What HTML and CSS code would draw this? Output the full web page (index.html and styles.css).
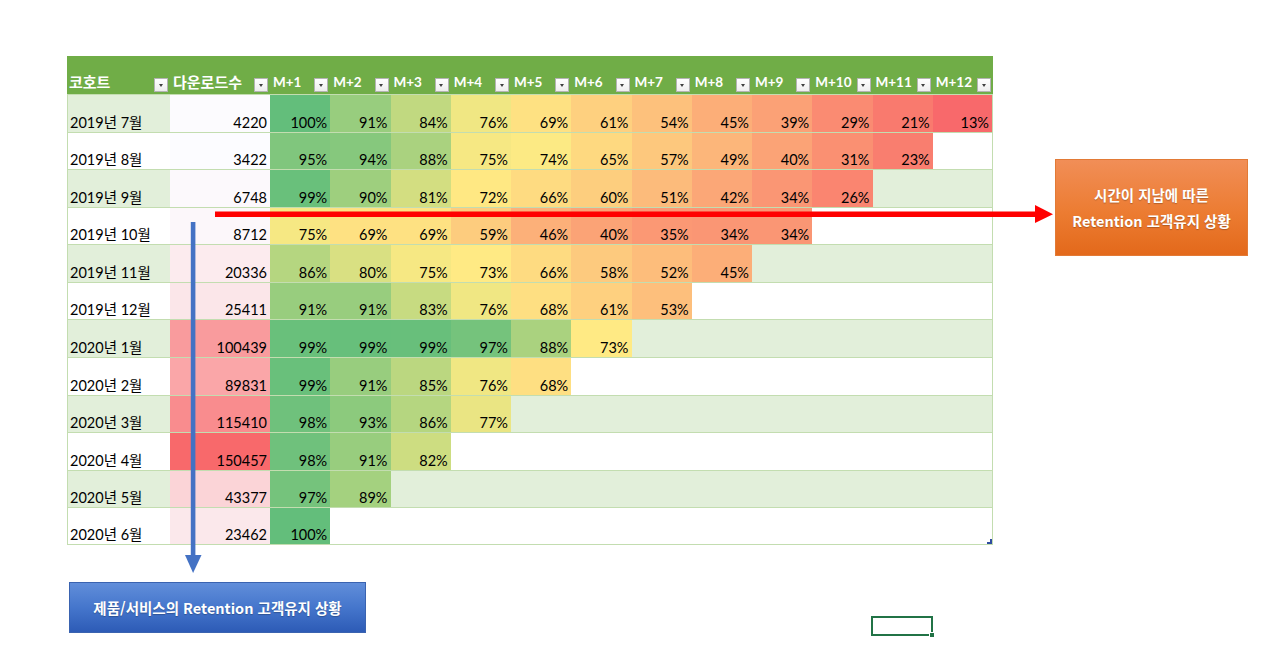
FILE: index.html
```html
<!DOCTYPE html>
<html lang="ko">
<head>
<meta charset="utf-8">
<title>Cohort Retention</title>
<link rel="stylesheet" href="styles.css">
</head>
<body>
<div class="page">
  <div class="cohort">
    <div class="hd"><span class="t ko">코호트</span><span class="dd"></span></div>
    <div class="hd"><span class="t ko">다운로드수</span><span class="dd"></span></div>
    <div class="hd"><span class="t">M+1</span><span class="dd"></span></div>
    <div class="hd"><span class="t">M+2</span><span class="dd"></span></div>
    <div class="hd"><span class="t">M+3</span><span class="dd"></span></div>
    <div class="hd"><span class="t">M+4</span><span class="dd"></span></div>
    <div class="hd"><span class="t">M+5</span><span class="dd"></span></div>
    <div class="hd"><span class="t">M+6</span><span class="dd"></span></div>
    <div class="hd"><span class="t">M+7</span><span class="dd"></span></div>
    <div class="hd"><span class="t">M+8</span><span class="dd"></span></div>
    <div class="hd"><span class="t">M+9</span><span class="dd"></span></div>
    <div class="hd"><span class="t">M+10</span><span class="dd"></span></div>
    <div class="hd"><span class="t">M+11</span><span class="dd"></span></div>
    <div class="hd"><span class="t">M+12</span><span class="dd"></span></div>

    <div class="row odd">
      <div class="c lbl">2019년 7월</div><div class="c num dl" data-v="4220">4220</div>
      <div class="c num pc" data-v="100">100%</div><div class="c num pc" data-v="91">91%</div><div class="c num pc" data-v="84">84%</div><div class="c num pc" data-v="76">76%</div><div class="c num pc" data-v="69">69%</div><div class="c num pc" data-v="61">61%</div><div class="c num pc" data-v="54">54%</div><div class="c num pc" data-v="45">45%</div><div class="c num pc" data-v="39">39%</div><div class="c num pc" data-v="29">29%</div><div class="c num pc" data-v="21">21%</div><div class="c num pc last" data-v="13">13%</div>
    </div>
    <div class="row">
      <div class="c lbl">2019년 8월</div><div class="c num dl" data-v="3422">3422</div>
      <div class="c num pc" data-v="95">95%</div><div class="c num pc" data-v="94">94%</div><div class="c num pc" data-v="88">88%</div><div class="c num pc" data-v="75">75%</div><div class="c num pc" data-v="74">74%</div><div class="c num pc" data-v="65">65%</div><div class="c num pc" data-v="57">57%</div><div class="c num pc" data-v="49">49%</div><div class="c num pc" data-v="40">40%</div><div class="c num pc" data-v="31">31%</div><div class="c num pc" data-v="23">23%</div><div class="c last"></div>
    </div>
    <div class="row odd">
      <div class="c lbl">2019년 9월</div><div class="c num dl" data-v="6748">6748</div>
      <div class="c num pc" data-v="99">99%</div><div class="c num pc" data-v="90">90%</div><div class="c num pc" data-v="81">81%</div><div class="c num pc" data-v="72">72%</div><div class="c num pc" data-v="66">66%</div><div class="c num pc" data-v="60">60%</div><div class="c num pc" data-v="51">51%</div><div class="c num pc" data-v="42">42%</div><div class="c num pc" data-v="34">34%</div><div class="c num pc" data-v="26">26%</div><div class="c"></div><div class="c last"></div>
    </div>
    <div class="row">
      <div class="c lbl">2019년 10월</div><div class="c num dl" data-v="8712">8712</div>
      <div class="c num pc" data-v="75">75%</div><div class="c num pc" data-v="69">69%</div><div class="c num pc" data-v="69">69%</div><div class="c num pc" data-v="59">59%</div><div class="c num pc" data-v="46">46%</div><div class="c num pc" data-v="40">40%</div><div class="c num pc" data-v="35">35%</div><div class="c num pc" data-v="34">34%</div><div class="c num pc" data-v="34">34%</div><div class="c"></div><div class="c"></div><div class="c last"></div>
    </div>
    <div class="row odd">
      <div class="c lbl">2019년 11월</div><div class="c num dl" data-v="20336">20336</div>
      <div class="c num pc" data-v="86">86%</div><div class="c num pc" data-v="80">80%</div><div class="c num pc" data-v="75">75%</div><div class="c num pc" data-v="73">73%</div><div class="c num pc" data-v="66">66%</div><div class="c num pc" data-v="58">58%</div><div class="c num pc" data-v="52">52%</div><div class="c num pc" data-v="45">45%</div><div class="c"></div><div class="c"></div><div class="c"></div><div class="c last"></div>
    </div>
    <div class="row">
      <div class="c lbl">2019년 12월</div><div class="c num dl" data-v="25411">25411</div>
      <div class="c num pc" data-v="91">91%</div><div class="c num pc" data-v="91">91%</div><div class="c num pc" data-v="83">83%</div><div class="c num pc" data-v="76">76%</div><div class="c num pc" data-v="68">68%</div><div class="c num pc" data-v="61">61%</div><div class="c num pc" data-v="53">53%</div><div class="c"></div><div class="c"></div><div class="c"></div><div class="c"></div><div class="c last"></div>
    </div>
    <div class="row odd">
      <div class="c lbl">2020년 1월</div><div class="c num dl" data-v="100439">100439</div>
      <div class="c num pc" data-v="99">99%</div><div class="c num pc" data-v="99.4">99%</div><div class="c num pc" data-v="99.2">99%</div><div class="c num pc" data-v="97">97%</div><div class="c num pc" data-v="88">88%</div><div class="c num pc" data-v="73">73%</div><div class="c"></div><div class="c"></div><div class="c"></div><div class="c"></div><div class="c"></div><div class="c last"></div>
    </div>
    <div class="row">
      <div class="c lbl">2020년 2월</div><div class="c num dl" data-v="89831">89831</div>
      <div class="c num pc" data-v="99">99%</div><div class="c num pc" data-v="91">91%</div><div class="c num pc" data-v="85">85%</div><div class="c num pc" data-v="76">76%</div><div class="c num pc" data-v="68">68%</div><div class="c"></div><div class="c"></div><div class="c"></div><div class="c"></div><div class="c"></div><div class="c"></div><div class="c last"></div>
    </div>
    <div class="row odd">
      <div class="c lbl">2020년 3월</div><div class="c num dl" data-v="115410">115410</div>
      <div class="c num pc" data-v="98">98%</div><div class="c num pc" data-v="93">93%</div><div class="c num pc" data-v="86">86%</div><div class="c num pc" data-v="77">77%</div><div class="c"></div><div class="c"></div><div class="c"></div><div class="c"></div><div class="c"></div><div class="c"></div><div class="c"></div><div class="c last"></div>
    </div>
    <div class="row">
      <div class="c lbl">2020년 4월</div><div class="c num dl" data-v="150457">150457</div>
      <div class="c num pc" data-v="98">98%</div><div class="c num pc" data-v="91">91%</div><div class="c num pc" data-v="82">82%</div><div class="c"></div><div class="c"></div><div class="c"></div><div class="c"></div><div class="c"></div><div class="c"></div><div class="c"></div><div class="c"></div><div class="c last"></div>
    </div>
    <div class="row odd">
      <div class="c lbl">2020년 5월</div><div class="c num dl" data-v="43377">43377</div>
      <div class="c num pc" data-v="97">97%</div><div class="c num pc" data-v="89">89%</div><div class="c"></div><div class="c"></div><div class="c"></div><div class="c"></div><div class="c"></div><div class="c"></div><div class="c"></div><div class="c"></div><div class="c"></div><div class="c last"></div>
    </div>
    <div class="row end">
      <div class="c lbl">2020년 6월</div><div class="c num dl" data-v="23462">23462</div>
      <div class="c num pc" data-v="100">100%</div><div class="c"></div><div class="c"></div><div class="c"></div><div class="c"></div><div class="c"></div><div class="c"></div><div class="c"></div><div class="c"></div><div class="c"></div><div class="c"></div><div class="c last"><span class="corner"></span></div>
    </div>
  </div>

  <svg class="arrow-red" width="1280" height="656" viewBox="0 0 1280 656">
    <rect x="215" y="211.5" width="822" height="5.5" fill="#FF0000"/>
    <polygon points="1035,205 1053,214.2 1035,223" fill="#FF0000"/>
  </svg>
  <svg class="arrow-blue" width="1280" height="656" viewBox="0 0 1280 656">
    <rect x="190.8" y="222" width="4.6" height="335" fill="#4472C4"/>
    <polygon points="185,555 201.5,555 193.1,573" fill="#4472C4"/>
  </svg>

  <div class="note note-orange">시간이 지남에 따른<br>Retention 고객유지 상황</div>
  <div class="note note-blue">제품/서비스의 Retention 고객유지 상황</div>
  <div class="selection"><span class="handle"></span></div>
</div>
<script src="app.js"></script>
</body>
</html>
```

FILE: styles.css
```css
* { box-sizing: border-box; }

body {
  margin: 0;
  background: #ffffff;
  font-family: Lato, "Noto Sans CJK KR", sans-serif;
}

.page {
  position: relative;
  width: 1280px;
  height: 656px;
  overflow: hidden;
}

.cohort {
  margin: 56px 0 0 67px;
  width: 926px;
  display: grid;
  grid-template-columns: 103px 100px repeat(12, 1fr);
  grid-template-rows: 38px repeat(12, 37.58px);
}

.row { display: contents; }

.hd {
  background: #70AD47;
  color: #ffffff;
  font-weight: 700;
  font-size: 13.5px;
  line-height: 18px;
  display: flex;
  align-items: flex-end;
  justify-content: space-between;
  padding: 0 2px 2px 3px;
  font-family: Lato, "Noto Sans CJK KR", sans-serif;
  white-space: nowrap;
}

.hd:first-child { padding-left: 2px; }

.hd .t { padding-bottom: 1px; }
.hd .ko { font-size: 15px; }

.dd {
  position: relative;
  flex: none;
  width: 14px;
  height: 14px;
  background: linear-gradient(#ffffff, #eeeeee);
  border: 1px solid #b4b4b4;
}

.dd::after {
  content: "";
  position: absolute;
  left: 3.5px;
  top: 5px;
  border-left: 2.5px solid transparent;
  border-right: 2.5px solid transparent;
  border-top: 3px solid #404040;
}

.c {
  position: relative;
  border-top: 1px solid #C3DDB0;
  display: flex;
  align-items: flex-end;
  padding: 0 3px 1px 3px;
  font-size: 14.5px;
  line-height: 17px;
  color: #000000;
  background: #ffffff;
  white-space: nowrap;
}

.odd .c { background: #E2EFDA; }

.lbl { border-left: 1px solid #C3DDB0; padding-left: 2px; }
.last { border-right: 1px solid #C3DDB0; }
.end .c { border-bottom: 1px solid #C3DDB0; }

.num { justify-content: flex-end; }

.corner {
  position: absolute;
  right: 0;
  bottom: 0;
  width: 5px;
  height: 5px;
  border-right: 2px solid #2F4C9F;
  border-bottom: 2px solid #2F4C9F;
}

.arrow-red,
.arrow-blue {
  position: absolute;
  left: 0;
  top: 0;
  pointer-events: none;
}

.note {
  position: absolute;
  color: #ffffff;
  font-family: "Noto Sans CJK KR", sans-serif;
  font-weight: 700;
  font-size: 14.5px;
  text-align: center;
  display: flex;
  align-items: center;
  justify-content: center;
  text-shadow: 0 1px 1px rgba(0, 0, 0, 0.25);
}

.note-orange {
  left: 1055px;
  top: 159px;
  width: 193px;
  height: 97px;
  line-height: 26px;
  background: linear-gradient(#F18E57, #EC7C32 55%, #E3691B);
  border: 1px solid #E27A36;
}

.note-blue {
  left: 69px;
  top: 582px;
  width: 297px;
  height: 51px;
  background: linear-gradient(#618EDA, #4576CC 50%, #2D5BB6);
  border: 1px solid #3A63B0;
}

.selection {
  position: absolute;
  left: 871px;
  top: 616px;
  width: 62px;
  height: 20px;
  border: 2px solid #217346;
}

.handle {
  position: absolute;
  right: -4px;
  bottom: -4px;
  width: 6px;
  height: 6px;
  background: #217346;
  border: 1px solid #ffffff;
}
```

FILE: app.js
```javascript
(function () {
  var RED = [248, 105, 107], YEL = [255, 235, 132], GRN = [99, 190, 123], WHT = [252, 252, 255];
  function mix(a, b, t) {
    t = Math.max(0, Math.min(1, t));
    return 'rgb(' + a.map(function (v, i) { return Math.round(v + (b[i] - v) * t); }).join(',') + ')';
  }
  var MIN = 13, MID = 73.5, MAX = 100;
  document.querySelectorAll('.pc').forEach(function (el) {
    var v = parseFloat(el.getAttribute('data-v'));
    el.style.backgroundColor = v <= MID ? mix(RED, YEL, (v - MIN) / (MID - MIN)) : mix(YEL, GRN, (v - MID) / (MAX - MID));
  });
  var DMIN = 3422, DMAX = 150457;
  document.querySelectorAll('.dl').forEach(function (el) {
    var v = parseFloat(el.getAttribute('data-v'));
    el.style.backgroundColor = mix(WHT, RED, (v - DMIN) / (DMAX - DMIN));
  });
})();
```
